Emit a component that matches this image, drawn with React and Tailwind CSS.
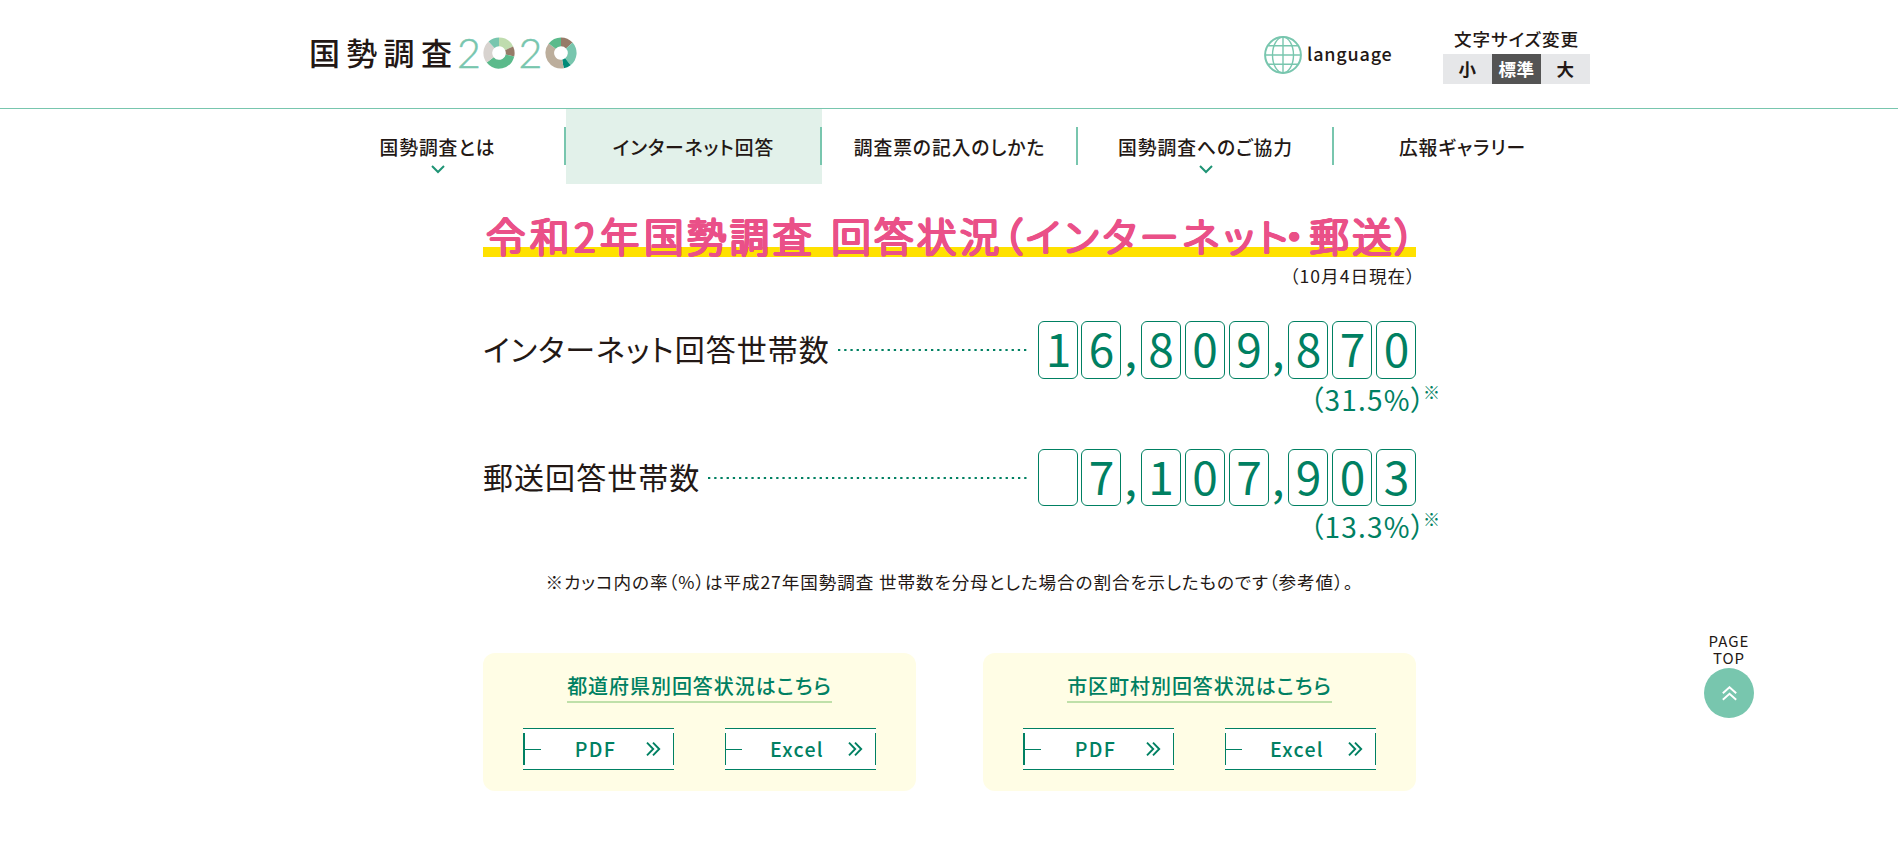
import React from "react";

const seg = (cx, cy, ro, ri, a0, a1) => {
  const p = (r, a) => {
    const t = ((a - 90) * Math.PI) / 180;
    return `${(cx + r * Math.cos(t)).toFixed(2)} ${(cy + r * Math.sin(t)).toFixed(2)}`;
  };
  const big = a1 - a0 > 180 ? 1 : 0;
  return `M${p(ro, a0)} A${ro} ${ro} 0 ${big} 1 ${p(ro, a1)} L${p(ri, a1)} A${ri} ${ri} 0 ${big} 0 ${p(ri, a0)} Z`;
};

const Donut = ({ parts }) => (
  <svg className="block h-8 w-8" viewBox="0 0 32 32">
    {parts.map(([a0, a1, fill]) => (
      <path key={a0} d={seg(16, 16, 15.6, 6.8, a0, a1)} fill={fill} />
    ))}
  </svg>
);

const DONUT_A = [
  [0, 65, "#bfdcae"],
  [65, 103, "#967b68"],
  [103, 232, "#5bba8b"],
  [232, 318, "#d8d3cf"],
  [318, 360, "#78c6ae"],
];
const DONUT_B = [
  [0, 48, "#967b68"],
  [48, 142, "#78c6ae"],
  [142, 170, "#008a78"],
  [170, 308, "#bcae9c"],
  [308, 360, "#5bba8b"],
];

const Logo = () => (
  <div className="-ml-[1px] flex h-8 items-start">
    <span className="block w-[148px] whitespace-nowrap text-[31px] leading-[29px] font-medium tracking-[6.3px]">国勢調査</span>
    <span className="block w-[23px] font-[Lato] text-[41px] leading-8 font-light text-[#78c6ae] [-webkit-text-stroke:0.5px_#78c6ae]">2</span>
    <span className="ml-[2.5px] block"><Donut parts={DONUT_A} /></span>
    <span className="ml-[4px] block w-[23px] font-[Lato] text-[41px] leading-8 font-light text-[#78c6ae] [-webkit-text-stroke:0.5px_#78c6ae]">2</span>
    <span className="ml-[3px] block"><Donut parts={DONUT_B} /></span>
  </div>
);

const Globe = () => (
  <svg className="block h-[38px] w-[38px]" viewBox="0 0 38 38" fill="none" stroke="#78c6ae" strokeWidth="1.4">
    <circle cx="19" cy="19" r="17.9" strokeWidth="2" />
    <ellipse cx="19" cy="19" rx="10.5" ry="17.9" />
    <path d="M19 1v36M1 19h36M4 9.7h30M4 28.3h30" />
  </svg>
);

const Header = () => (
  <header className="h-[109px] border-b border-[#78c6ae] pl-[2px]">
    <div className="mx-auto flex w-[1280px] justify-between">
      <div className="pt-[37px]"><Logo /></div>
      <div className="flex">
        <div className="mt-[36px] flex h-[38px] items-center">
          <Globe />
          <span className="mb-[4px] ml-[5px] w-[136px] text-[18px] leading-6 font-medium tracking-[0.8px]">language</span>
        </div>
        <div className="w-[147px] pt-[25px]">
          <div className="h-[29px] text-center text-[17.6px] leading-[27px] font-medium tracking-[1px]">文字サイズ変更</div>
          <div className="flex text-center text-[17.5px] leading-[30px] font-bold tracking-[0.5px]">
            <span className="w-[49px] bg-[#e6e7e9]">小</span>
            <span className="w-[49px] bg-[#545454] text-white">標準</span>
            <span className="w-[49px] bg-[#e6e7e9]">大</span>
          </div>
        </div>
      </div>
    </div>
  </header>
);

const NAV = [
  { label: "国勢調査とは", down: true },
  { label: "インターネット回答", active: true },
  { label: "調査票の記入のしかた" },
  { label: "国勢調査へのご協力", down: true },
  { label: "広報ギャラリー" },
];

const Nav = () => (
  <nav className="pl-[2px]">
    <div className="mx-auto flex w-[1280px]">
      {NAV.map((n, i) => (
        <div key={n.label} className={`flex h-[75px] w-[256px] pt-[18px] ${n.active ? "bg-[#e2f1ea]" : ""}`}>
          <div className="flex flex-1 flex-col items-center pt-[6px] pl-[1px]">
            <span className="text-[18.8px] leading-[28px] font-medium tracking-[0.95px] whitespace-nowrap">{n.label}</span>
            {n.down && (
              <svg className="mt-[4px] block h-[9px] w-[14px]" viewBox="0 0 14 9" fill="none" stroke="#1f9475" strokeWidth="2">
                <path d="M1 1l6 6 6-6" />
              </svg>
            )}
          </div>
          {i < 4 && <div className="h-[38px] w-[2px] bg-[#78c6ae]" />}
        </div>
      ))}
    </div>
  </nav>
);

const Digit = ({ children }) => (
  <span className="block h-[57.6px] w-[40px] rounded-[6px] border border-[#008062] pl-[1px] text-center text-[46px] leading-[51px]">{children}</span>
);
const Comma = () => <span className="block w-[20px] text-center text-[46px] leading-[54px]">,</span>;

const Leader = () => (
  <svg className="mt-[28px] mr-[8px] ml-[8px] block h-[2px] min-w-0 flex-1" stroke="#008062" strokeWidth="2">
    <line x1="0" y1="1" x2="100%" y2="1" strokeDasharray="2.3 3.9" />
  </svg>
);

const Count = ({ label, groups, rate }) => (
  <div className="h-[127.3px]">
    <div className="flex h-[57.6px]">
      <span className="text-[30px] leading-[55px] tracking-[1.05px] whitespace-nowrap">{label}</span>
      <Leader />
      <span className="flex w-[378px] text-[#008062]">
        {groups.map((g, i) => (
          <React.Fragment key={i}>
            {i > 0 && <Comma />}
            <span className={i === 0 ? "flex gap-[3px]" : "flex gap-[4px]"}>
              {g.split("").map((d, j) => (
                <Digit key={j}>{d}</Digit>
              ))}
            </span>
          </React.Fragment>
        ))}
      </span>
    </div>
    <div className="-mr-[24px] flex justify-end text-[#008062]">
      <span className="-mr-[3px] text-[28px] leading-[40px] tracking-[1.2px]">（{rate}）</span>
      <span className="text-[17px] leading-[26px]">※</span>
    </div>
  </div>
);

const FileButton = ({ label, thick }) => (
  <div className="flex h-[42px] w-[151px] items-center border-y border-[#008062] bg-white">
    <span className={`h-[32px] bg-[#008062] ${thick ? "w-[2px]" : "w-px"}`} />
    <span className="mt-[1px] h-px w-[16px] bg-[#008062]" />
    <span className="flex-1 pl-[4px] text-center text-[19.6px] leading-[40px] font-medium tracking-[1.3px]">{label}</span>
    <svg className="mr-[12px] block h-[14px] w-[15px]" viewBox="0 0 15 14" fill="none" stroke="#008062" strokeWidth="1.9">
      <path d="M1 .7l6.2 6.3L1 13.3M7 .7l6.2 6.3L7 13.3" />
    </svg>
    <span className="h-[32px] w-px bg-[#008062]" />
  </div>
);

const Card = ({ title }) => (
  <div className="flex h-[138px] w-[433px] flex-col items-center rounded-[12px] bg-[#fffde5] text-[#008062]">
    <div className="mt-[17px] h-[33px] border-b-2 border-[#bfe0a9] text-[20px] leading-[31px] font-medium tracking-[0.95px] whitespace-nowrap">{title}</div>
    <div className="mt-[25px] flex gap-[51px]">
      <FileButton label="PDF" thick />
      <FileButton label="Excel" />
    </div>
  </div>
);

export default function App() {
  return (
    <div className="relative h-[867px] overflow-hidden bg-white font-['Noto_Sans_CJK_JP',sans-serif] text-[#231815] [font-feature-settings:'palt']">
      <Header />
      <Nav />
      <div className="pl-[1px]">
        <main className="mx-auto w-[933px] pt-[28px]">
          <h1 className="h-[46px] bg-[linear-gradient(#ffe100,#ffe100)] bg-[length:100%_10px] bg-[position:0_35px] bg-no-repeat pl-[3px] text-center text-[39.4px] leading-[46px] font-light tracking-[3.4px] [word-spacing:4px] whitespace-nowrap text-[#ea5088] [text-shadow:1.4px_0_#ea5088,-1.4px_0_#ea5088,0_1.4px_#ea5088,0_-1.4px_#ea5088,1px_1px_#ea5088,-1px_1px_#ea5088,1px_-1px_#ea5088,-1px_-1px_#ea5088]">
            <span className="tracking-[4.7px]">令和2年</span>国勢調査 回答状況（インターネット<span className="mr-[2px] -ml-[7px]">・</span>郵送）
          </h1>
          <p className="h-[63.4px] pt-[5px] text-right text-[17.6px] leading-[26px] tracking-[1px]">（10月4日現在）</p>
          <Count label="インターネット回答世帯数" groups={["16", "809", "870"]} rate="31.5%" />
          <Count label="郵送回答世帯数" groups={[" 7", "107", "903"]} rate="13.3%" />
          <p className="-mt-[7px] h-[84px] text-center text-[17.6px] leading-[26px] tracking-[0.9px] whitespace-nowrap">
            ※カッコ内の率（%）は平成27年国勢調査 世帯数を分母とした場合の割合を示したものです（参考値）。
          </p>
          <div className="flex justify-between">
            <Card title="都道府県別回答状況はこちら" />
            <Card title="市区町村別回答状況はこちら" />
          </div>
        </main>
      </div>
      <div className="absolute top-[632px] left-[1699px] flex w-[60px] flex-col items-center">
        <span className="text-center text-[15px] leading-[17px] tracking-[1px]">PAGE<br />TOP</span>
        <span className="mt-[2px] flex h-[50px] w-[50px] items-center justify-center rounded-full bg-[#78c6ae]">
          <svg className="block h-[15px] w-[15px]" viewBox="0 0 15 15" fill="none" stroke="#fff" strokeWidth="1.9">
            <path d="M.8 7.2l6.7-6 6.7 6M.8 13.8l6.7-6 6.7 6" />
          </svg>
        </span>
      </div>
    </div>
  );
}
